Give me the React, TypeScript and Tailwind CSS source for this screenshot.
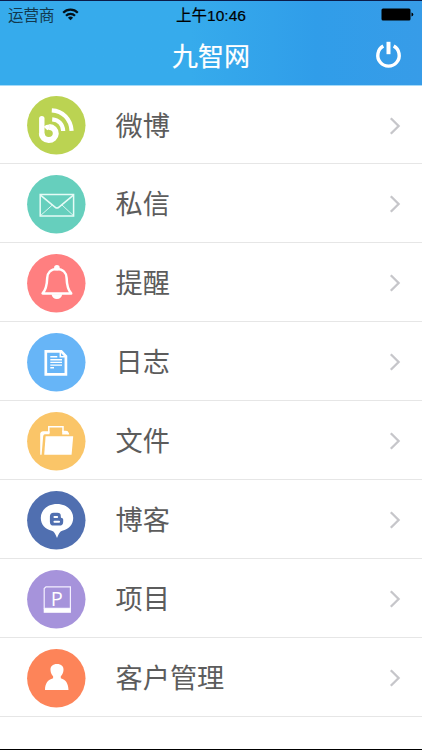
import type { ReactNode } from "react";

type Item = { label: string; color: string; icon: ReactNode };

const items: Item[] = [
  {
    label: "微博",
    color: "#bbd352",
    icon: (
      <g fill="none" stroke="#fff">
        <path d="M14.800 22.600V38" strokeWidth="5.400" strokeLinecap="round" />
        <path d="M14.800 37.500a7 6.500 0 1 0 7.400-6.500" strokeWidth="6" />
        <path d="M18.500 32.500q1.500-1.600 4-1.500" strokeWidth="5" />
        <path d="M25.200 23.400c6.200.4 10.600 4.800 11 11.600" strokeWidth="4.200" />
        <path d="M24.800 14.400c11 .6 19 8.600 19.800 20.400" strokeWidth="4.200" />
      </g>
    ),
  },
  {
    label: "私信",
    color: "#66cfbd",
    icon: (
      <g fill="none" stroke="#e6fbf6">
        <rect x="13.200" y="19.500" width="33.400" height="21.500" strokeWidth="1.500" />
        <path d="M13.500 20.200 28.300 32.300q1.700 1.400 3.400 0L46.400 20.200" strokeWidth="1.600" />
        <path d="M13.500 40.600 25.300 30M46.400 40.600 35 30" strokeWidth="0.900" />
      </g>
    ),
  },
  {
    label: "提醒",
    color: "#ff7f80",
    icon: (
      <g>
        <path
          d="M29.900 15c-6.200 0-9.500 4-9.700 9-.2 6.700-.8 11.300-4.600 15.400h28.600c-3.800-4.100-4.400-8.700-4.600-15.400-.2-5-3.500-9-9.700-9Z"
          fill="none"
          stroke="#fff"
          strokeWidth="2.500"
          strokeLinejoin="round"
        />
        <circle cx="29.900" cy="13.800" r="2.800" fill="#fff" />
        <path d="M24.500 40.300h10.800c-.5 3-2.600 4.800-5.400 4.800s-4.900-1.800-5.400-4.800Z" fill="#fff" />
      </g>
    ),
  },
  {
    label: "日志",
    color: "#67b5f7",
    icon: (
      <g fill="none" stroke="#fff">
        <path d="M18.800 18.400h15.500l4.600 4.800v18.200H18.800Z" strokeWidth="2.700" />
        <path d="M33.300 17.500v6.200h6.300" strokeWidth="1.500" />
        <path d="M23.300 23.700h7M23.300 26.700h11.700M23.300 29.400h11.700M23.300 32.100h11.700M23.300 34.800h3.700" strokeWidth="1.400" />
      </g>
    ),
  },
  {
    label: "文件",
    color: "#fac568",
    icon: (
      <g>
        <path d="M18.600 24.200h27.600l-1.600 18.500H17.200Z" fill="#fff" />
        <path d="M21.800 21V14.800H36v4.400l4 .6 1.400 2.300" fill="none" stroke="#fff" strokeWidth="1.500" />
        <path d="M13.200 42.700V21.500q.3-2 2.600-2.300h6.700v3h-4.700q-1.300.2-1.600 1.800l-1.600 18.700Z" fill="#fff" />
        <path d="M35.200 18.600 41 20l1.400 2.600h-7.200Z" fill="#fff" />
      </g>
    ),
  },
  {
    label: "博客",
    color: "#506fb0",
    icon: (
      <g>
        <path
          d="M30 13c-9.200 0-16.200 5.900-16.200 14 0 6.300 4.300 11.200 11 12.800 2.400.6 3.300 2.800 5.200 7.200 1.900-4.400 2.800-6.600 5.200-7.200 6.700-1.600 11-6.500 11-12.800 0-8.100-7-14-16.200-14Z"
          fill="#fff"
        />
        <path
          d="M26.600 21.700h3.900q3.300 0 3.300 3.200v1.200q0 .9 1 .9 1.400 0 1.400 1.600v2.100q0 3.900-4 3.900h-5.600q-3.700 0-3.700-3.900v-5.100q0-3.900 3.700-3.900Z"
          fill="#506fb0"
        />
        <path d="M27.400 26h2.800M27.400 30.700h4.700" stroke="#fff" strokeWidth="1.900" strokeLinecap="round" />
      </g>
    ),
  },
  {
    label: "项目",
    color: "#a693db",
    icon: (
      <g>
        <path d="M19 16.800h24.400v21.500H17.200V18.600Z" fill="none" stroke="#f4f0ff" strokeWidth="1.200" />
        <path d="M16.700 38.600h27.200v4.200H16.700Z" fill="#fff" />
        <text
          x="23.800"
          y="36.200"
          fontSize="20"
          fill="#fff"
          fontFamily="'Open Sans', 'Noto Sans', sans-serif"
        >
          P
        </text>
      </g>
    ),
  },
  {
    label: "客户管理",
    color: "#fd8459",
    icon: (
      <path
        d="M30 15c-4.300 0-6.800 2.400-6.500 6 .2 2.900 1 4.700 2.600 6.200v2c-5.200 1.600-8 4.800-8.100 11.800h23.500c-.2-7-2.800-10.200-7.700-11.800v-2c1.600-1.500 2.500-3.300 2.700-6.200.3-3.600-2.200-6-6.500-6Z"
        fill="#fff"
      />
    ),
  },
];

function StatusBar() {
  return (
    <div className="flex h-[27px] items-center px-[8px] pt-px text-black">
      <div className="flex w-[140px] items-center gap-[7px] text-[15.5px] leading-none">
        <span className="pt-px text-[#12384d]">运营商</span>
        <svg className="-mt-[2px]" width="17" height="13" viewBox="0 0 17 13" fill="none" stroke="#041018" strokeWidth="2.200">
          <path d="M1.200 4.700a10.200 10.200 0 0 1 14.600 0" />
          <path d="M4 7.800a6.300 6.300 0 0 1 9 0" />
          <path d="M8.500 12.300 5.900 9.800a3.700 3.700 0 0 1 5.200 0Z" fill="#041018" stroke="none" />
        </svg>
      </div>
      <div className="flex-1 pt-px text-center text-[15.5px] leading-none [-webkit-text-stroke:0.2px_#000]">上午10:46</div>
      <div className="flex w-[140px] justify-end">
        <svg className="-mt-px" width="33" height="13" viewBox="0 0 33 13">
          <rect x="0.500" y="0.500" width="29" height="12" rx="1.500" />
          <path d="M30.500 4.500q1.800.4 1.800 2t-1.800 2Z" />
        </svg>
      </div>
    </div>
  );
}

function Header() {
  return (
    <header className="h-[85px] border-t border-[#0b1c4a] bg-linear-to-r from-[#36abec] from-45% via-[#309de9] via-75% to-[#379ce8]">
      <StatusBar />
      <div className="flex h-[54px] items-center pr-[20px] pl-[47px]">
        <h1 className="flex-1 pt-[3px] text-center text-[26px] leading-none text-white [-webkit-text-stroke:0.2px_#fff]">
          九智网
        </h1>
        <svg width="27" height="28" viewBox="0 0 27 28" fill="none" stroke="#fff">
          <path d="M8.300 5.100a10.700 10.700 0 1 0 10.400 0" strokeWidth="3.400" />
          <path d="M13.500 0.800v12.400" strokeWidth="4" />
        </svg>
      </div>
    </header>
  );
}

function Row({ label, color, icon }: Item) {
  return (
    <li className="flex h-[79px] items-center border-b border-[#e6e6e6] pr-[21px] pl-[27px]">
      <svg className="mt-[2px] shrink-0" width="59" height="59" viewBox="0 0 59 59">
        <circle cx="29.300" cy="29.300" r="29.200" fill={color} />
        {icon}
      </svg>
      <span className="ml-[29.5px] flex-1 pt-[4px] text-[27.2px] leading-none text-[#5c5c5c]">{label}</span>
      <svg className="mt-[2px]" width="12" height="18" viewBox="0 0 12 18" fill="none" stroke="#c6c6ca" strokeWidth="2.300">
        <path d="M1.800 1.300 9.600 9l-7.800 7.700" />
      </svg>
    </li>
  );
}

export default function App() {
  return (
    <div className="flex h-[750px] w-[422px] flex-col overflow-hidden border-b border-black bg-white font-['Liberation_Sans','Noto_Sans_CJK_SC',sans-serif]">
      <Header />
      <ul className="border-t border-[#a5daf8] [&>li:first-child]:h-[78px]">
        {items.map((item) => (
          <Row key={item.label} {...item} />
        ))}
      </ul>
    </div>
  );
}
